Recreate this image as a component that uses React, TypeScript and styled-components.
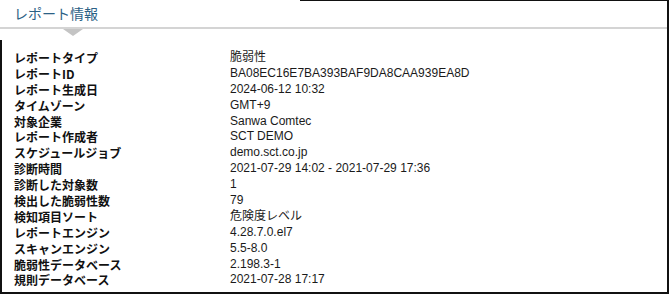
import React from "react";
import styled, { createGlobalStyle } from "styled-components";

const Global = createGlobalStyle`
  html, body { margin: 0; padding: 0; background: #fff; }
  body { font-family: "Liberation Sans", "Noto Sans CJK JP", Arial, sans-serif; }
`;

const Panel = styled.section`
  width: 669px;
  height: 294px;
  box-sizing: border-box;
  border-right: 2px solid #111;
  border-bottom: 2px solid #111;
  display: flex;
  flex-direction: column;
  background: #fff;
`;

const Header = styled.header`
  position: relative;
  height: 27px;
  flex: none;
  border-bottom: 2px solid #d4d4d4;
  display: flex;
  align-items: center;
  padding-left: 14px;
  &::before {
    content: "";
    position: absolute;
    top: 0;
    left: 300px;
    right: 0;
    height: 1px;
    background: #111;
  }
`;

const Title = styled.h2`
  margin: 0 0 2px 0;
  font-family: "Noto Sans CJK JP", sans-serif;
  font-weight: 400;
  font-size: 14px;
  line-height: 18px;
  color: #2c6185;
`;

const PointerRow = styled.div`
  height: 11px;
  flex: none;
  padding-left: 63px;
`;

const Pointer = styled.div`
  width: 0;
  height: 0;
  border-left: 10px solid transparent;
  border-right: 10px solid transparent;
  border-top: 7px solid #c4c4c4;
`;

const Body = styled.div`
  flex: 1;
  border-left: 2px solid #111;
  padding: 10px 0 0 12px;
  display: grid;
  grid-template-columns: 216px 1fr;
  grid-auto-rows: 15.9px;
  align-content: start;
`;

const Label = styled.div`
  font-family: "Noto Sans CJK JP", sans-serif;
  font-weight: 700;
  font-size: 12px;
  line-height: 15.9px;
  color: #111;
  white-space: nowrap;
`;

const Value = styled.div`
  font-family: "Liberation Sans", "Noto Sans CJK JP", sans-serif;
  font-size: 12px;
  line-height: 15.9px;
  color: #1a1a1a;
  white-space: nowrap;
`;

const rows: [string, string][] = [
  ["レポートタイプ", "脆弱性"],
  ["レポートID", "BA08EC16E7BA393BAF9DA8CAA939EA8D"],
  ["レポート生成日", "2024-06-12 10:32"],
  ["タイムゾーン", "GMT+9"],
  ["対象企業", "Sanwa Comtec"],
  ["レポート作成者", "SCT DEMO"],
  ["スケジュールジョブ", "demo.sct.co.jp"],
  ["診断時間", "2021-07-29 14:02 - 2021-07-29 17:36"],
  ["診断した対象数", "1"],
  ["検出した脆弱性数", "79"],
  ["検知項目ソート", "危険度レベル"],
  ["レポートエンジン", "4.28.7.0.el7"],
  ["スキャンエンジン", "5.5-8.0"],
  ["脆弱性データベース", "2.198.3-1"],
  ["規則データベース", "2021-07-28 17:17"],
];

export default function App() {
  return (
    <>
      <Global />
      <Panel>
        <Header>
          <Title>レポート情報</Title>
        </Header>
        <PointerRow>
          <Pointer />
        </PointerRow>
        <Body>
          {rows.map(([k, v]) => (
            <React.Fragment key={k}>
              <Label>{k}</Label>
              <Value>{v}</Value>
            </React.Fragment>
          ))}
        </Body>
      </Panel>
    </>
  );
}
